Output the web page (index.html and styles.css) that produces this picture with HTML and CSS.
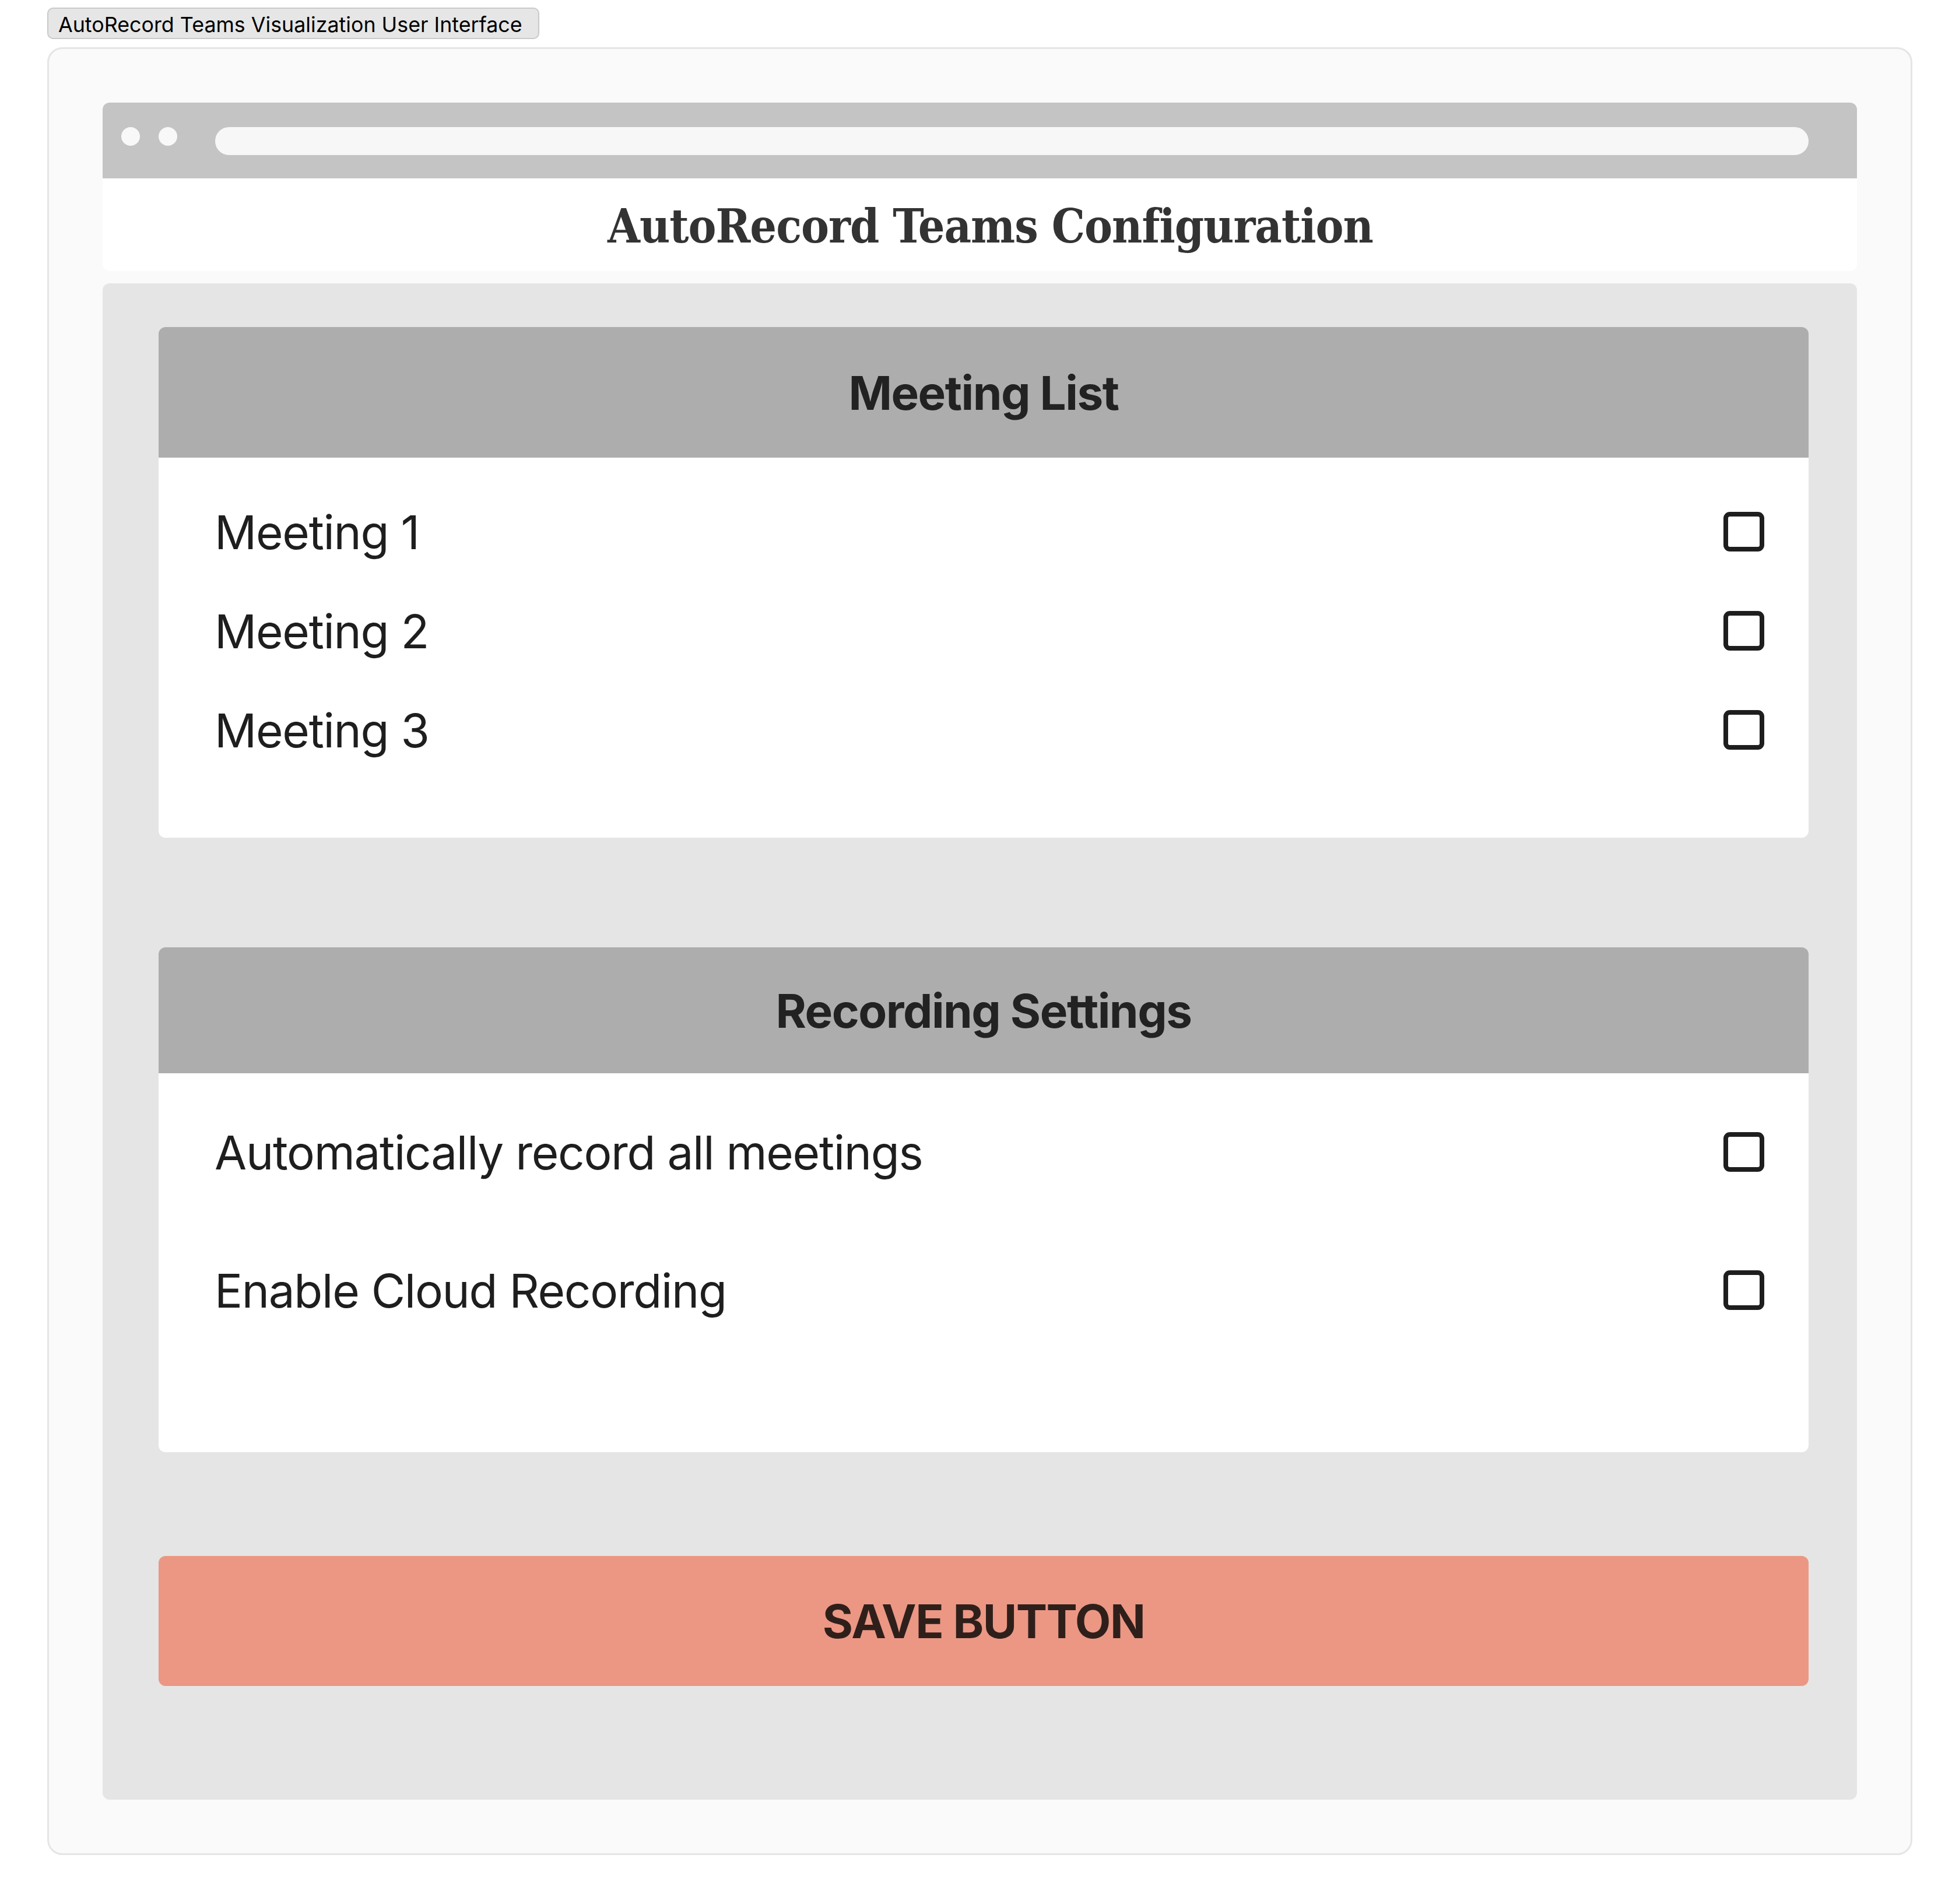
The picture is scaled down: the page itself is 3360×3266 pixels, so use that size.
FILE: index.html
```html
<!DOCTYPE html>
<html lang="en">
<head>
<meta charset="utf-8">
<title>AutoRecord Teams Visualization User Interface</title>
<link rel="stylesheet" href="styles.css">
</head>
<body>
<div class="page">
  <div class="tag">AutoRecord Teams Visualization User Interface</div>
  <div class="frame">
    <div class="browser-bar">
      <span class="dot"></span>
      <span class="dot"></span>
      <span class="address"></span>
    </div>
    <div class="title-box">
      <h1 class="title">AutoRecord Teams Configuration</h1>
    </div>
    <div class="panel">
      <section class="section">
        <div class="section-head head-meetings">Meeting List</div>
        <div class="section-body body-meetings">
          <div class="row"><span class="label">Meeting 1</span><span class="check"></span></div>
          <div class="row"><span class="label">Meeting 2</span><span class="check"></span></div>
          <div class="row"><span class="label">Meeting 3</span><span class="check"></span></div>
        </div>
      </section>
      <section class="section section-settings">
        <div class="section-head head-settings">Recording Settings</div>
        <div class="section-body body-settings">
          <div class="row"><span class="label">Automatically record all meetings</span><span class="check"></span></div>
          <div class="row"><span class="label">Enable Cloud Recording</span><span class="check"></span></div>
        </div>
      </section>
      <button class="save" type="button">SAVE BUTTON</button>
    </div>
  </div>
</div>
</body>
</html>
```

FILE: styles.css
```css
html, body {
  margin: 0;
  padding: 0;
  background: #ffffff;
}

.page {
  padding: 13px 80px 80px 81px;
  font-family: "Inter", "Noto Sans", sans-serif;
}

.tag {
  display: inline-block;
  box-sizing: border-box;
  height: 54px;
  width: 844px;
  padding: 4px 0 0 17px;
  background: #e6e6e6;
  border: 2px solid #c9c9c9;
  border-radius: 10px;
  font-size: 35.8px;
  line-height: 46px;
  color: #000;
  white-space: nowrap;
  letter-spacing: 0;
}

.frame {
  margin-top: 14px;
  background: #fafafa;
  border: 3px solid #e5e5e5;
  border-radius: 26px;
  padding: 92px;
}

.browser-bar {
  height: 130px;
  box-sizing: border-box;
  background: #c4c4c4;
  border-radius: 12px 12px 0 0;
  display: flex;
  align-items: flex-start;
  padding: 42px 83px 0 32px;
  gap: 32px;
}

.dot {
  width: 32px;
  height: 32px;
  border-radius: 50%;
  background: #f8f8f8;
  flex: none;
}

.address {
  flex: 1;
  height: 48px;
  margin-left: 33px;
  border-radius: 24px;
  background: #f7f7f7;
}

.title-box {
  height: 159px;
  box-sizing: border-box;
  padding-top: 12px;
  background: #ffffff;
  border-radius: 0 0 12px 12px;
  display: flex;
  justify-content: center;
}

.title {
  margin: 0;
  padding-left: 36px;
  font-family: "DejaVu Serif", "Liberation Serif", serif;
  font-stretch: condensed;
  font-weight: 700;
  font-size: 80px;
  line-height: 140px;
  color: #333333;
  letter-spacing: -1px;
}

.panel {
  margin-top: 21px;
  background: #e5e5e5;
  border-radius: 12px;
  padding: 75px 83px 195px 96px;
}

.section-settings {
  margin-top: 188px;
}

.section-head {
  background: #adadad;
  border-radius: 12px 12px 0 0;
  display: flex;
  align-items: center;
  justify-content: center;
  font-weight: 700;
  font-size: 80px;
  color: #222222;
  letter-spacing: -1.5px;
}

.head-meetings {
  height: 224px;
}

.head-settings {
  height: 216px;
}

.section-body {
  background: #ffffff;
  border-radius: 0 0 12px 12px;
  padding: 0 76px 0 96px;
  display: flex;
  flex-direction: column;
}

.body-meetings {
  height: 652px;
  box-sizing: border-box;
  padding-top: 42px;
}

.body-settings {
  height: 650px;
  box-sizing: border-box;
  padding-top: 50px;
  gap: 67px;
}

.row {
  height: 170px;
  display: flex;
  align-items: center;
  justify-content: space-between;
}

.label {
  font-size: 80px;
  color: #1e1e1e;
  letter-spacing: -1.3px;
}

.check {
  box-sizing: border-box;
  width: 70px;
  height: 68px;
  border: 8px solid #1e1e1e;
  border-radius: 11px;
  flex: none;
}

.save {
  display: block;
  width: 100%;
  height: 223px;
  margin-top: 178px;
  border: none;
  border-radius: 12px;
  background: #eb9784;
  color: #2f1f1b;
  font-family: "Inter", "Noto Sans", sans-serif;
  font-weight: 700;
  font-size: 80px;
  letter-spacing: -1.6px;
  padding: 0;
}
```
